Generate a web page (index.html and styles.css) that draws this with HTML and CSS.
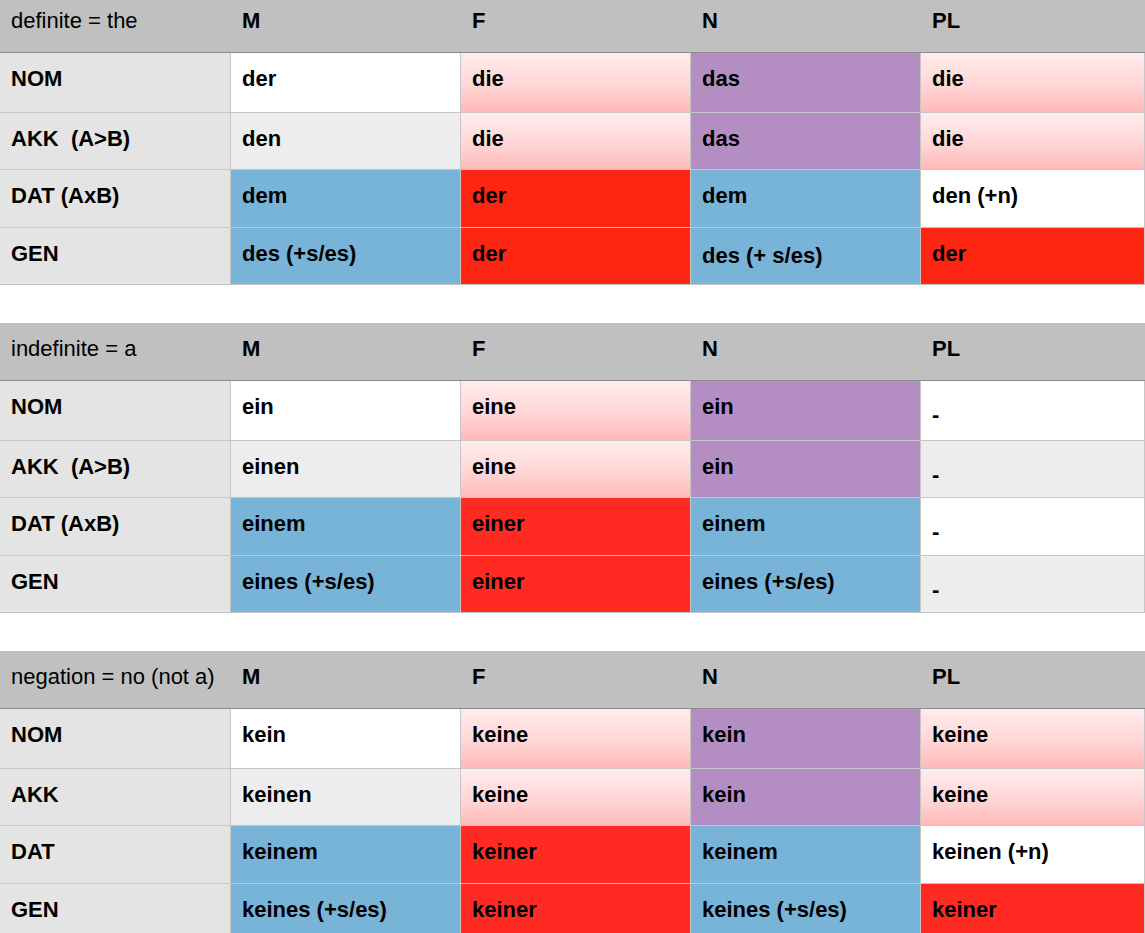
FILE: index.html
```html
<!DOCTYPE html>
<html lang="de">
<head>
<meta charset="utf-8">
<title>Artikel</title>
<link rel="stylesheet" href="styles.css">
</head>
<body>
<div class="page">
  <div class="tbl t1">
    <div class="c hd lead">definite = the</div><div class="c hd">M</div><div class="c hd">F</div><div class="c hd">N</div><div class="c hd">PL</div>
    <div class="c case">NOM</div><div class="c w">der</div><div class="c pk">die</div><div class="c pu">das</div><div class="c pk">die</div>
    <div class="c case">AKK&nbsp; (A&gt;B)</div><div class="c g">den</div><div class="c pk">die</div><div class="c pu">das</div><div class="c pk">die</div>
    <div class="c case">DAT (AxB)</div><div class="c bl">dem</div><div class="c rd">der</div><div class="c bl">dem</div><div class="c w">den (+n)</div>
    <div class="c case">GEN</div><div class="c bl">des (+s/es)</div><div class="c rd">der</div><div class="c bl low">des (+ s/es)</div><div class="c rd">der</div>
  </div>
  <div class="tbl t2">
    <div class="c hd lead">indefinite = a</div><div class="c hd">M</div><div class="c hd">F</div><div class="c hd">N</div><div class="c hd">PL</div>
    <div class="c case">NOM</div><div class="c w">ein</div><div class="c pk">eine</div><div class="c pu">ein</div><div class="c w dash">-</div>
    <div class="c case">AKK&nbsp; (A&gt;B)</div><div class="c g">einen</div><div class="c pk">eine</div><div class="c pu">ein</div><div class="c g dash">-</div>
    <div class="c case">DAT (AxB)</div><div class="c bl">einem</div><div class="c rd">einer</div><div class="c bl">einem</div><div class="c w dash">-</div>
    <div class="c case">GEN</div><div class="c bl">eines (+s/es)</div><div class="c rd">einer</div><div class="c bl">eines (+s/es)</div><div class="c g dash">-</div>
  </div>
  <div class="tbl t3">
    <div class="c hd lead">negation = no (not a)</div><div class="c hd">M</div><div class="c hd">F</div><div class="c hd">N</div><div class="c hd">PL</div>
    <div class="c case">NOM</div><div class="c w">kein</div><div class="c pk">keine</div><div class="c pu">kein</div><div class="c pk">keine</div>
    <div class="c case">AKK</div><div class="c g">keinen</div><div class="c pk">keine</div><div class="c pu">kein</div><div class="c pk">keine</div>
    <div class="c case">DAT</div><div class="c bl">keinem</div><div class="c rd">keiner</div><div class="c bl">keinem</div><div class="c w">keinen (+n)</div>
    <div class="c case">GEN</div><div class="c bl">keines (+s/es)</div><div class="c rd">keiner</div><div class="c bl">keines (+s/es)</div><div class="c rd">keiner</div>
  </div>
</div>
</body>
</html>
```
FILE: styles.css
```css
html, body {
  margin: 0;
  padding: 0;
  background: #ffffff;
  overflow: hidden;
}
.page {
  display: flex;
  flex-direction: column;
  gap: 38px;
  margin-top: -5px;
  font-family: "Liberation Sans", Arial, Helvetica, sans-serif;
  color: #000;
}
.tbl {
  display: grid;
  grid-template-columns: 231px 230px 230px 230px 1fr;
  grid-template-rows: 58px 60px 57px 58px 57px;
}
.c {
  box-sizing: border-box;
  padding: 13px 6px 0 11px;
  font-size: 22px;
  line-height: 26px;
  font-weight: bold;
  white-space: nowrap;
  overflow: hidden;
  border-right: 1px solid #c6c6c6;
  border-bottom: 1px solid #c6c6c6;
}
.hd {
  background: #bfc0bf;
  border-right: none;
  border-bottom: 1px solid #8d8d8d;
}
.hd.lead {
  font-weight: normal;
}
.case {
  background: #e3e4e3;
}
.w { background: #ffffff; }
.g { background: #ededed; }
.pk { background: linear-gradient(to bottom, #ffecec 0%, #ffd6d6 55%, #ffb9b9 100%); }
.pu { background: #b48ec3; }
.bl { background: #78b3d8; }
.rd { background: #ff2b23; }
.t1 .rd { background: #ff2513; }
.low {
  padding-top: 15px;
}
.dash {
  padding-top: 21px;
}
```
